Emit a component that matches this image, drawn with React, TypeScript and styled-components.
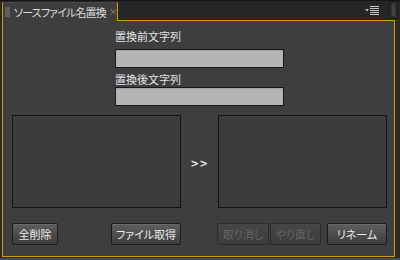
import React from "react";
import styled, { createGlobalStyle } from "styled-components";

const GlobalStyle = createGlobalStyle`
  html, body {
    margin: 0;
    padding: 0;
    background: #2a2a2a;
  }
  * {
    box-sizing: border-box;
  }
`;

const ORANGE = "#d8990f";

const Window = styled.div`
  width: 400px;
  height: 260px;
  display: flex;
  flex-direction: column;
  background: #2a2a2a;
  font-family: "Noto Sans CJK JP", "Noto Sans", sans-serif;
  font-feature-settings: "palt";
  overflow: hidden;
`;

const TabBar = styled.div`
  height: 20px;
  display: flex;
  align-items: flex-end;
  background: #262626;
  border-top: 1px solid #151515;
  padding-left: 2px;
`;

const Tab = styled.div`
  position: relative;
  z-index: 1;
  width: 116px;
  height: 19px;
  margin-bottom: -1px;
  display: flex;
  align-items: center;
  padding: 0 0 0 2px;
  background: #3e3e3e;
  border-left: 1px solid ${ORANGE};
  border-right: 1px solid ${ORANGE};
  border-top: 1px solid #4a4a4a;
  overflow: hidden;
`;

const TabGripWrap = styled.span`
  flex-shrink: 0;
  display: flex;
  margin-right: 4px;
`;

const TabTitle = styled.span`
  flex-shrink: 0;
  font-size: 11px;
  line-height: 16px;
  color: #dcdcdc;
  white-space: nowrap;
  letter-spacing: -0.85px;
`;

const TabClose = styled.span`
  flex-shrink: 0;
  font-size: 9px;
  line-height: 16px;
  color: #8a8a8a;
  margin-left: 3px;
`;

const Spacer = styled.div`
  flex: 1;
`;

const MenuButton = styled.div`
  align-self: center;
  margin-right: 10px;
  display: flex;
`;

const GripBox = styled.div`
  width: 9px;
  height: 18px;
  margin-right: 2px;
  margin-bottom: 1px;
  border: 1px solid #1a1a1a;
  background: #2d2d2d;
  display: flex;
  justify-content: center;
  align-items: center;
`;

const Panel = styled.div`
  margin-left: 2px;
  width: 393px;
  height: 237px;
  border: 1px solid ${ORANGE};
  background: #3e3e3e;
  padding: 7px 7px 10px 9px;
  display: flex;
  flex-direction: column;
`;

const FieldGroup = styled.div`
  width: 169px;
  align-self: center;
  display: flex;
  flex-direction: column;
`;

const Label = styled.div<{ $top: number }>`
  height: 16px;
  margin-top: ${({ $top }) => $top}px;
  font-size: 11px;
  line-height: 16px;
  color: #e4e4e4;
`;

const TextField = styled.div<{ $gap: number }>`
  height: 19px;
  margin-top: ${({ $gap }) => $gap}px;
  background: #b4b4b4;
  border: 1px solid #181818;
  box-shadow: inset 0 1px 0 #a4a4a4;
`;

const ListRow = styled.div`
  margin-top: 9px;
  display: grid;
  grid-template-columns: 169px 1fr 169px;
  height: 93px;
`;

const ListBox = styled.div`
  background: #3c3c3c;
  border: 1px solid #141414;
`;

const Arrow = styled.div`
  display: flex;
  align-items: center;
  justify-content: center;
  padding-top: 4px;
  font-family: "DejaVu Sans", sans-serif;
  font-size: 10px;
  font-weight: bold;
  color: #e8e8e8;
  letter-spacing: 0.5px;
`;

const ButtonRow = styled.div`
  margin-top: 15px;
  display: grid;
  grid-template-columns: 169px 1fr 169px;
`;

const ButtonGroup = styled.div`
  display: flex;
  justify-content: space-between;
`;

const Pair = styled.div`
  display: flex;
  gap: 1px;
  margin-left: -1px;
`;

const Button = styled.div<{ $w: number; $disabled?: boolean }>`
  width: ${({ $w }) => $w}px;
  height: 22px;
  display: flex;
  align-items: center;
  justify-content: center;
  font-size: 11px;
  border-radius: 2px;
  border: 1px solid ${({ $disabled }) => ($disabled ? "#2c2c2c" : "#1c1c1c")};
  color: ${({ $disabled }) => ($disabled ? "#656565" : "#ececec")};
  background: ${({ $disabled }) =>
    $disabled
      ? "linear-gradient(#474747, #3c3c3c)"
      : "linear-gradient(#5e5e5e, #3d3d3d)"};
  box-shadow: ${({ $disabled }) =>
    $disabled ? "none" : "inset 0 1px 0 #6a6a6a"};
`;

const BottomStrip = styled.div`
  flex: 1;
  margin-top: 1px;
  background: #4c4c4c;
`;

const TabGrip = () => (
  <svg width="5" height="10" viewBox="0 0 5 10">
    {[1, 3, 5, 7, 9].map((y) => (
      <rect key={y} x="0" y={y - 0.5} width="5" height="1" fill="#7e7e7e" />
    ))}
  </svg>
);

const MenuIcon = () => (
  <svg width="14" height="9" viewBox="0 0 14 9">
    <path d="M0 3 L4 3 L2 5.5 Z" fill="#bdbdbd" />
    {[0.5, 2.5, 4.5, 6.5, 8.5].map((y) => (
      <rect key={y} x="5" y={y - 0.5} width="9" height="1" fill="#c8c8c8" />
    ))}
  </svg>
);

const PanelGrip = () => (
  <svg width="3" height="12" viewBox="0 0 3 12">
    {[1, 3, 5, 7, 9, 11].map((y) => (
      <rect key={y} x="0" y={y - 0.5} width="3" height="1" fill="#5a5a5a" />
    ))}
  </svg>
);

export default function App() {
  return (
    <>
      <GlobalStyle />
      <Window>
        <TabBar>
          <Tab>
            <TabGripWrap>
              <TabGrip />
            </TabGripWrap>
            <TabTitle>ソースファイル名置換</TabTitle>
            <TabClose>×</TabClose>
          </Tab>
          <Spacer />
          <MenuButton>
            <MenuIcon />
          </MenuButton>
          <GripBox>
            <PanelGrip />
          </GripBox>
        </TabBar>
        <Panel>
          <FieldGroup>
            <Label $top={0}>置換前文字列</Label>
            <TextField $gap={5} />
            <Label $top={3}>置換後文字列</Label>
            <TextField $gap={0} />
          </FieldGroup>
          <ListRow>
            <ListBox />
            <Arrow>&gt;&gt;</Arrow>
            <ListBox />
          </ListRow>
          <ButtonRow>
            <ButtonGroup>
              <Button $w={46}>全削除</Button>
              <Button $w={70}>ファイル取得</Button>
            </ButtonGroup>
            <div />
            <ButtonGroup>
              <Pair>
                <Button $w={52} $disabled>
                  取り消し
                </Button>
                <Button $w={51} $disabled>
                  やり直し
                </Button>
              </Pair>
              <Button $w={60}>リネーム</Button>
            </ButtonGroup>
          </ButtonRow>
        </Panel>
        <BottomStrip />
      </Window>
    </>
  );
}
